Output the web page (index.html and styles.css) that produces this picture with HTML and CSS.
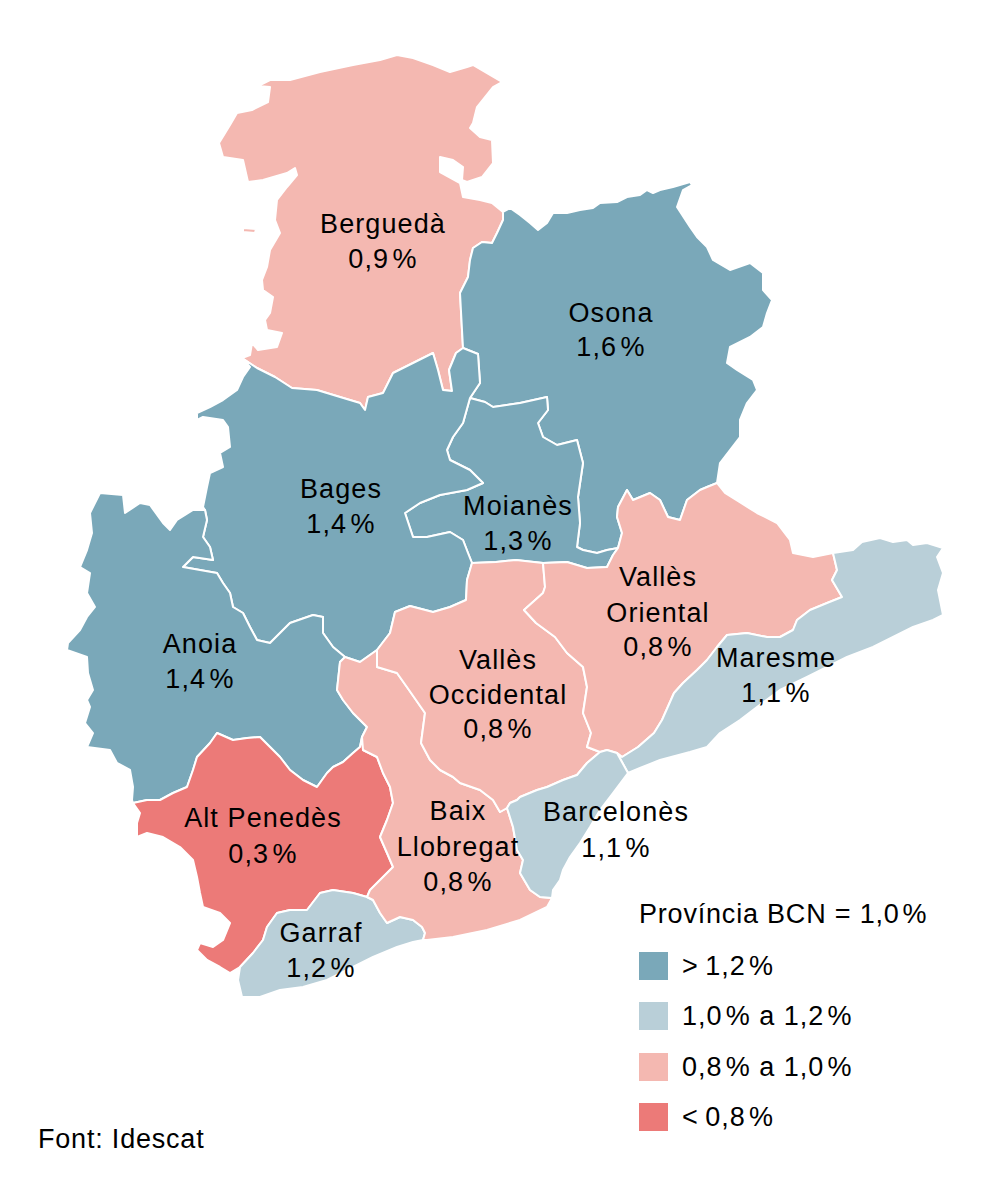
FILE: index.html
```html
<!DOCTYPE html>
<html lang="ca">
<head>
<meta charset="utf-8">
<title>Mapa comarques BCN</title>
<link rel="stylesheet" href="styles.css">
</head>
<body>
<div class="figure">
  <svg class="map" width="1005" height="1182" viewBox="0 0 1005 1182" xmlns="http://www.w3.org/2000/svg">
    <g class="regions">
      <polygon class="region c-pink" points="258,86 270,87 268,102 252,110 237,113 230,125 219,143 223,157 243,160 248,182 263,180 287,173 295,168 297,175 287,187 277,200 275,220 280,233 270,250 267,267 262,280 263,290 273,297 270,313 265,320 267,330 282,333 277,347 258,350 252,343 250,355 242,358 257,368 275,377 292,388 317,390 340,397 360,403 365,410 368,397 383,393 393,373 415,362 433,353 438,370 443,390 452,391 449,370 456,353 463,348 462,330 460,293 468,277 470,260 473,248 482,242 492,243 497,233 503,220 503,212 492,203 480,200 463,197 460,183 440,172 440,157 453,160 463,167 462,180 467,182 482,177 493,163 492,140 480,137 470,128 473,123 477,107 493,87 502,82 473,65 467,67 450,72 433,65 413,58 397,55 380,60 353,65 320,72 290,80 270,80"/>
      <polygon class="region c-pink" points="243,228 256,229 255,233 243,232"/>
      <polygon class="region c-dark" points="503,212 503,220 497,233 492,243 482,242 473,248 470,260 468,277 460,293 462,330 463,348 478,354 480,383 470,398 485,402 493,407 520,403 547,397 548,410 538,423 543,437 557,445 577,440 583,463 578,497 580,523 577,547 583,550 597,553 607,550 618,548 622,533 617,517 618,507 627,490 633,500 650,493 660,500 668,517 680,520 687,500 700,490 707,487 717,483 720,463 730,450 740,437 740,420 747,403 757,390 753,380 737,370 727,363 730,347 750,337 763,327 767,313 772,300 763,290 763,273 750,263 730,270 713,260 707,247 697,237 690,227 677,207 683,190 692,185 690,182 673,187 660,190 653,193 647,190 640,195 627,197 617,202 600,203 593,208 580,210 567,213 553,213 547,223 538,230 530,223 520,215 510,208"/>
      <polygon class="region c-dark" points="470,398 485,402 493,407 520,403 547,397 548,410 538,423 543,437 557,445 577,440 583,463 578,497 580,523 577,547 583,550 597,553 607,550 618,548 613,555 607,567 587,568 567,562 543,563 516,560 496,562 472,563 468,553 463,540 450,532 427,537 413,537 405,513 420,503 440,495 467,490 483,483 470,470 450,460 447,450 453,437 463,423"/>
      <polygon class="region c-dark" points="242,358 257,368 275,377 292,388 317,390 340,397 360,403 365,410 368,397 383,393 393,373 415,362 433,353 438,370 443,390 452,391 449,370 456,353 463,348 478,354 480,383 470,398 463,423 453,437 447,450 450,460 470,470 483,483 467,490 440,495 420,503 405,513 413,537 427,537 450,532 463,540 468,553 472,563 467,580 466,600 450,607 433,612 410,606 395,612 390,633 377,650 360,662 345,657 333,647 323,633 323,617 313,615 290,623 280,633 270,643 257,640 250,627 243,613 233,607 230,593 223,583 217,573 200,570 183,567 193,557 213,560 210,547 203,537 207,520 205,510 203,507 207,487 210,473 223,467 220,453 230,447 228,427 223,420 203,417 197,420 197,413 210,407 223,400 237,390 243,377 250,367"/>
      <polygon class="region c-dark" points="100,493 123,495 125,513 140,503 150,505 163,523 170,530 177,520 193,510 205,510 207,520 203,537 210,547 213,560 193,557 183,567 200,570 217,573 223,583 230,593 233,607 243,613 250,627 257,640 270,643 280,633 290,623 313,615 323,617 323,633 333,647 345,657 340,662 337,690 343,700 353,713 367,727 362,737 360,747 353,753 343,762 333,767 327,773 317,787 303,780 290,770 280,757 270,747 260,737 247,738 233,740 217,733 210,743 197,757 193,770 187,787 173,793 160,800 147,800 133,803 132,800 133,787 130,770 117,763 110,750 87,747 93,733 85,723 90,707 87,700 93,690 88,673 87,657 67,650 68,643 80,630 87,617 95,607 87,593 90,573 80,567 87,550 92,533 90,513"/>
      <polygon class="region c-red" points="133,803 147,800 160,800 173,793 187,787 193,770 197,757 210,743 217,733 233,740 247,738 260,737 270,747 280,757 290,770 303,780 317,787 327,773 333,767 343,762 353,753 360,747 362,737 363,750 377,757 383,773 390,787 393,803 387,820 380,837 387,853 393,867 380,880 370,890 367,897 353,893 333,890 320,893 307,910 290,910 277,913 267,927 263,940 253,953 240,967 230,973 220,967 207,960 197,950 200,943 213,947 223,940 230,923 220,913 203,907 200,893 197,877 193,860 180,847 163,837 147,833 137,837 137,823 140,813"/>
      <polygon class="region c-light" points="367,897 373,900 380,913 387,923 400,917 413,920 422,927 425,933 423,940 413,942 397,947 373,957 353,967 327,980 303,987 280,990 260,997 242,997 238,980 240,967 253,953 263,940 267,927 277,913 290,910 307,910 320,893 333,890 353,893"/>
      <polygon class="region c-pink" points="345,657 360,662 377,650 377,667 397,673 409,690 425,713 421,743 430,760 440,770 453,777 460,783 480,790 493,800 500,812 507,808 513,827 517,850 523,860 520,873 530,890 540,897 552,898 547,907 520,920 487,930 453,937 427,940 423,940 425,933 422,927 413,920 400,917 387,923 380,913 373,900 367,897 370,890 380,880 393,867 387,853 380,837 387,820 393,803 390,787 383,773 377,757 363,750 362,737 367,727 353,713 343,700 337,690 340,662"/>
      <polygon class="region c-pink" points="472,563 496,562 516,560 543,563 545,587 543,593 524,610 536,623 555,637 567,653 583,667 587,687 583,713 591,733 587,747 600,752 587,763 577,775 563,780 547,787 537,790 520,797 517,800 510,803 507,808 500,812 493,800 480,790 460,783 453,777 440,770 430,760 421,743 425,713 409,690 397,673 377,667 377,650 390,633 395,612 410,606 433,612 450,607 466,600 467,580"/>
      <polygon class="region c-pink" points="600,752 587,747 591,733 583,713 587,687 583,667 567,653 555,637 536,623 524,610 543,593 545,587 543,563 567,562 587,568 607,567 613,555 618,548 622,533 617,517 618,507 627,490 633,500 650,493 660,500 668,517 680,520 687,500 700,490 707,487 717,483 725,493 741,503 757,513 777,523 790,540 793,553 813,557 833,553 837,570 832,580 842,597 827,603 810,610 797,620 793,630 780,637 767,637 747,633 727,635 717,647 707,660 697,670 683,683 674,693 662,720 654,733 638,747 622,757 617,753 607,750"/>
      <polygon class="region c-light" points="617,753 622,757 638,747 654,733 662,720 674,693 683,683 697,670 707,660 717,647 727,635 747,633 767,637 780,637 793,630 797,620 810,610 827,603 842,597 832,580 837,570 833,553 853,550 862,542 880,538 893,542 907,540 913,545 927,543 943,548 937,557 943,573 938,590 943,615 933,620 913,627 893,637 873,647 847,657 827,667 807,677 780,690 757,707 740,720 720,733 707,747 690,752 660,760 640,768 628,773"/>
      <polygon class="region c-light" points="507,808 510,803 517,800 520,797 537,790 547,787 563,780 577,775 587,763 600,752 607,750 617,753 628,773 613,793 600,810 590,827 580,843 570,857 563,870 560,880 553,890 552,898 540,897 530,890 520,873 523,860 517,850 513,827"/>
    </g>
    <g class="labels">
      <text class="lbl" x="383" y="233">Berguedà</text>
      <text class="lbl" x="383" y="268">0,9&#8202;%</text>
      <text class="lbl" x="611" y="322">Osona</text>
      <text class="lbl" x="611" y="356">1,6&#8202;%</text>
      <text class="lbl" x="341" y="498">Bages</text>
      <text class="lbl" x="341" y="533">1,4&#8202;%</text>
      <text class="lbl" x="518" y="515">Moianès</text>
      <text class="lbl" x="518" y="550">1,3&#8202;%</text>
      <text class="lbl" x="200" y="653">Anoia</text>
      <text class="lbl" x="200" y="688">1,4&#8202;%</text>
      <text class="lbl" x="658" y="586">Vallès</text>
      <text class="lbl" x="658" y="622">Oriental</text>
      <text class="lbl" x="658" y="656">0,8&#8202;%</text>
      <text class="lbl" x="776" y="667">Maresme</text>
      <text class="lbl" x="776" y="702">1,1&#8202;%</text>
      <text class="lbl" x="498" y="669">Vallès</text>
      <text class="lbl" x="498" y="704">Occidental</text>
      <text class="lbl" x="498" y="738">0,8&#8202;%</text>
      <text class="lbl" x="263" y="827">Alt Penedès</text>
      <text class="lbl" x="263" y="863">0,3&#8202;%</text>
      <text class="lbl" x="458" y="820">Baix</text>
      <text class="lbl" x="458" y="856">Llobregat</text>
      <text class="lbl" x="458" y="891">0,8&#8202;%</text>
      <text class="lbl" x="616" y="821">Barcelonès</text>
      <text class="lbl" x="616" y="857">1,1&#8202;%</text>
      <text class="lbl" x="321" y="942">Garraf</text>
      <text class="lbl" x="321" y="977">1,2&#8202;%</text>
    </g>
  </svg>

  <div class="legend">
    <div class="legend-title">Província BCN = 1,0&#8202;%</div>
    <div class="legend-row"><span class="swatch sw-dark"></span><span>&gt;&#8201;1,2&#8202;%</span></div>
    <div class="legend-row"><span class="swatch sw-light"></span><span>1,0&#8202;% a 1,2&#8202;%</span></div>
    <div class="legend-row"><span class="swatch sw-pink"></span><span>0,8&#8202;% a 1,0&#8202;%</span></div>
    <div class="legend-row"><span class="swatch sw-red"></span><span>&lt;&#8201;0,8&#8202;%</span></div>
  </div>

  <div class="source">Font: Idescat</div>
</div>
</body>
</html>
```

FILE: styles.css
```css
html, body {
  margin: 0;
  padding: 0;
  background: #ffffff;
}

body {
  font-family: "Liberation Sans", Arial, sans-serif;
  color: #000000;
}

.figure {
  position: relative;
  width: 1005px;
  height: 1182px;
  overflow: hidden;
}

.map {
  display: block;
}

.region {
  stroke: #ffffff;
  stroke-width: 2;
  stroke-linejoin: round;
}

.c-dark { fill: #7aa8b9; }
.c-light { fill: #b9cfd8; }
.c-pink { fill: #f4b8b1; }
.c-red { fill: #ec7a78; }

.lbl {
  font-family: "Liberation Sans", Arial, sans-serif;
  font-size: 27px;
  letter-spacing: 1.1px;
  fill: #000000;
  text-anchor: middle;
}

.legend {
  position: absolute;
  left: 639px;
  top: 899px;
  display: flex;
  flex-direction: column;
  gap: 22.5px;
  font-size: 27px;
  letter-spacing: 1px;
}

.legend-title {
  line-height: 30px;
  letter-spacing: 0.8px;
  white-space: nowrap;
}

.legend-row {
  display: flex;
  align-items: center;
  gap: 14px;
  height: 28px;
  line-height: 28px;
  white-space: nowrap;
}

.swatch {
  display: block;
  width: 29px;
  height: 28px;
  flex: none;
}

.sw-dark { background: #7aa8b9; }
.sw-light { background: #b9cfd8; }
.sw-pink { background: #f4b8b1; }
.sw-red { background: #ec7a78; }

.source {
  position: absolute;
  left: 38px;
  top: 1124px;
  font-size: 27px;
  line-height: 30px;
  letter-spacing: 0.8px;
}
```
